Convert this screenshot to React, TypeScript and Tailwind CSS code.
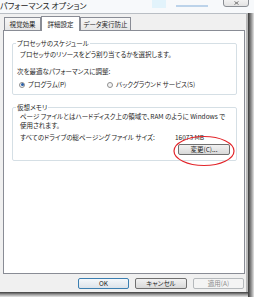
import React from "react";

const jp = "font-['Meiryo_UI','Noto_Sans_CJK_JP',sans-serif] [font-feature-settings:'palt']";

const Radio = ({ checked, label }: { checked?: boolean; label: string }) => (
  <div className="flex items-center gap-[3px]">
    <span className="w-[6px] h-[6px] rounded-full border border-[#8f8f8f] bg-[#f4f4f4] flex items-center justify-center">
      {checked && <span className="w-[3px] h-[3px] rounded-full bg-[#2a5fa8]" />}
    </span>
    <span>{label}</span>
  </div>
);

const Btn = ({ label, primary, disabled, className = "" }: { label: string; primary?: boolean; disabled?: boolean; className?: string }) => (
  <div
    className={
      "h-[11px] flex items-center justify-center rounded-[2px] border text-[6.5px] " +
      (disabled
        ? "border-[#b5b9bc] bg-[#f4f4f4] text-[#8b8b8b] "
        : primary
        ? "border-[#3c7fb1] bg-gradient-to-b from-[#f5f8fb] to-[#dde3ea] text-[#1e1e1e] "
        : "border-[#707070] bg-gradient-to-b from-[#f2f2f2] to-[#d9d9d9] text-[#1e1e1e] ") +
      className
    }
  >
    {label}
  </div>
);

export default function App() {
  return (
    <div className={"w-[254px] h-[297px] overflow-hidden bg-white flex flex-col text-[#1e1e1e] text-[6.5px] leading-[9px] " + jp}>
      {/* title bar */}
      <div className="relative h-[13px] bg-[#f7f9fb] flex items-center shrink-0">
        <span className="text-[8px] leading-[10px] text-[#222] -mt-[2px]">パフォーマンス オプション</span>
        <div className="absolute left-[152px] top-0 w-[14px] h-[8px] bg-[#e2f3fb]" />
        <div className="absolute left-[176px] top-[5px] w-[32px] h-[2px] bg-[#bcd3ea]" />
        <div className="absolute right-[5px] -top-[2px] w-[26px] h-[9px] rounded-b-[3px] border border-[#8a8e94] bg-gradient-to-b from-[#f4f4f4] to-[#e3e3e3] flex items-end justify-center pb-[1px]">
          <svg width="5" height="4" viewBox="0 0 5 4">
            <path d="M0.5 0.5 L4.5 3.5 M4.5 0.5 L0.5 3.5" stroke="#6a6a6a" strokeWidth="0.9" />
          </svg>
        </div>
      </div>

      {/* window body + right shadow */}
      <div className="flex flex-1">
        <div className="w-[248px] flex flex-col">
          <div className="h-[279px] bg-[#f0f0f0] border-t border-[#b9bec4] border-r-[2px] border-r-[#b8b8b8] flex flex-col pl-[3px] pr-[2px]">
            {/* tabs */}
            <div className="flex items-end h-[16px] pl-[1px]">
              <div className="h-[13px] w-[37px] border border-[#898c95] border-b-0 bg-gradient-to-b from-[#f6f6f6] to-[#e7e7e7] flex items-center justify-center">視覚効果</div>
              <div className="h-[15px] w-[39px] border border-[#898c95] border-b-0 -mb-[1px] bg-white flex items-center justify-center relative z-10">詳細設定</div>
              <div className="h-[13px] w-[51px] border border-[#898c95] border-b-0 bg-gradient-to-b from-[#f6f6f6] to-[#e7e7e7] flex items-center justify-center">データ実行防止</div>
            </div>

            {/* panel */}
            <div className="h-[244px] w-[242px] border border-[#898c95] bg-white flex flex-col pl-[8px]">
              <fieldset className="mt-[8px] w-[225px] border border-[#d5dfe5] rounded-[2px] pl-[6px] pb-[5px]">
                <legend className="px-[1px] -ml-[3px] h-[8px] leading-[8px]">プロセッサのスケジュール</legend>
                <div className="mt-[3px] pl-[1px]">プロセッサのリソースをどう割り当てるかを選択します。</div>
                <div className="mt-[8px] -ml-[2px]">次を最適なパフォーマンスに調整:</div>
                <div className="mt-[4px] flex">
                  <div className="w-[88px]">
                    <Radio checked label="プログラム(P)" />
                  </div>
                  <Radio label="バックグラウンド サービス(S)" />
                </div>
              </fieldset>

              <fieldset className="mt-[8px] w-[225px] h-[58px] border border-[#d5dfe5] rounded-[2px] pl-[6px]">
                <legend className="px-[1px] -ml-[3px] h-[8px] leading-[8px]">仮想メモリ</legend>
                <div className="mt-[1px] pl-[1px] leading-[9px]">
                  ページ ファイルとはハードディスク上の領域で、RAM のように Windows で
                  <br />
                  使用されます。
                </div>
                <div className="mt-[3px] pl-[1px] flex">
                  <span className="w-[155px]">すべてのドライブの総ページング ファイル サイズ:</span>
                  <span>16073 MB</span>
                </div>
                <div className="mt-[2px] flex justify-end pr-[6px]">
                  <Btn label="変更(C)..." className="w-[52px]" />
                </div>
              </fieldset>
            </div>

            {/* dialog buttons */}
            <div className="mt-[4px] flex justify-end gap-[6px]">
              <Btn label="OK" primary className="w-[51px]" />
              <Btn label="キャンセル" className="w-[52px]" />
              <Btn label="適用(A)" disabled className="w-[51px]" />
            </div>
          </div>
          {/* bottom shadow */}
          <div className="flex-1 bg-gradient-to-b from-[#3e3e3e] via-[#9a9a9a] to-[#e8e8e8]" />
        </div>
        <div className="w-[6px] bg-gradient-to-r from-[#3a3a3a] via-[#8a8a8a] to-[#e6e6e6]" />
      </div>

      {/* red annotation ellipse */}
      <svg className="absolute left-0 top-0 pointer-events-none" width="254" height="297">
        <ellipse cx="204" cy="151" rx="30" ry="14.5" fill="none" stroke="#e3262b" strokeWidth="1.2" />
      </svg>
    </div>
  );
}
